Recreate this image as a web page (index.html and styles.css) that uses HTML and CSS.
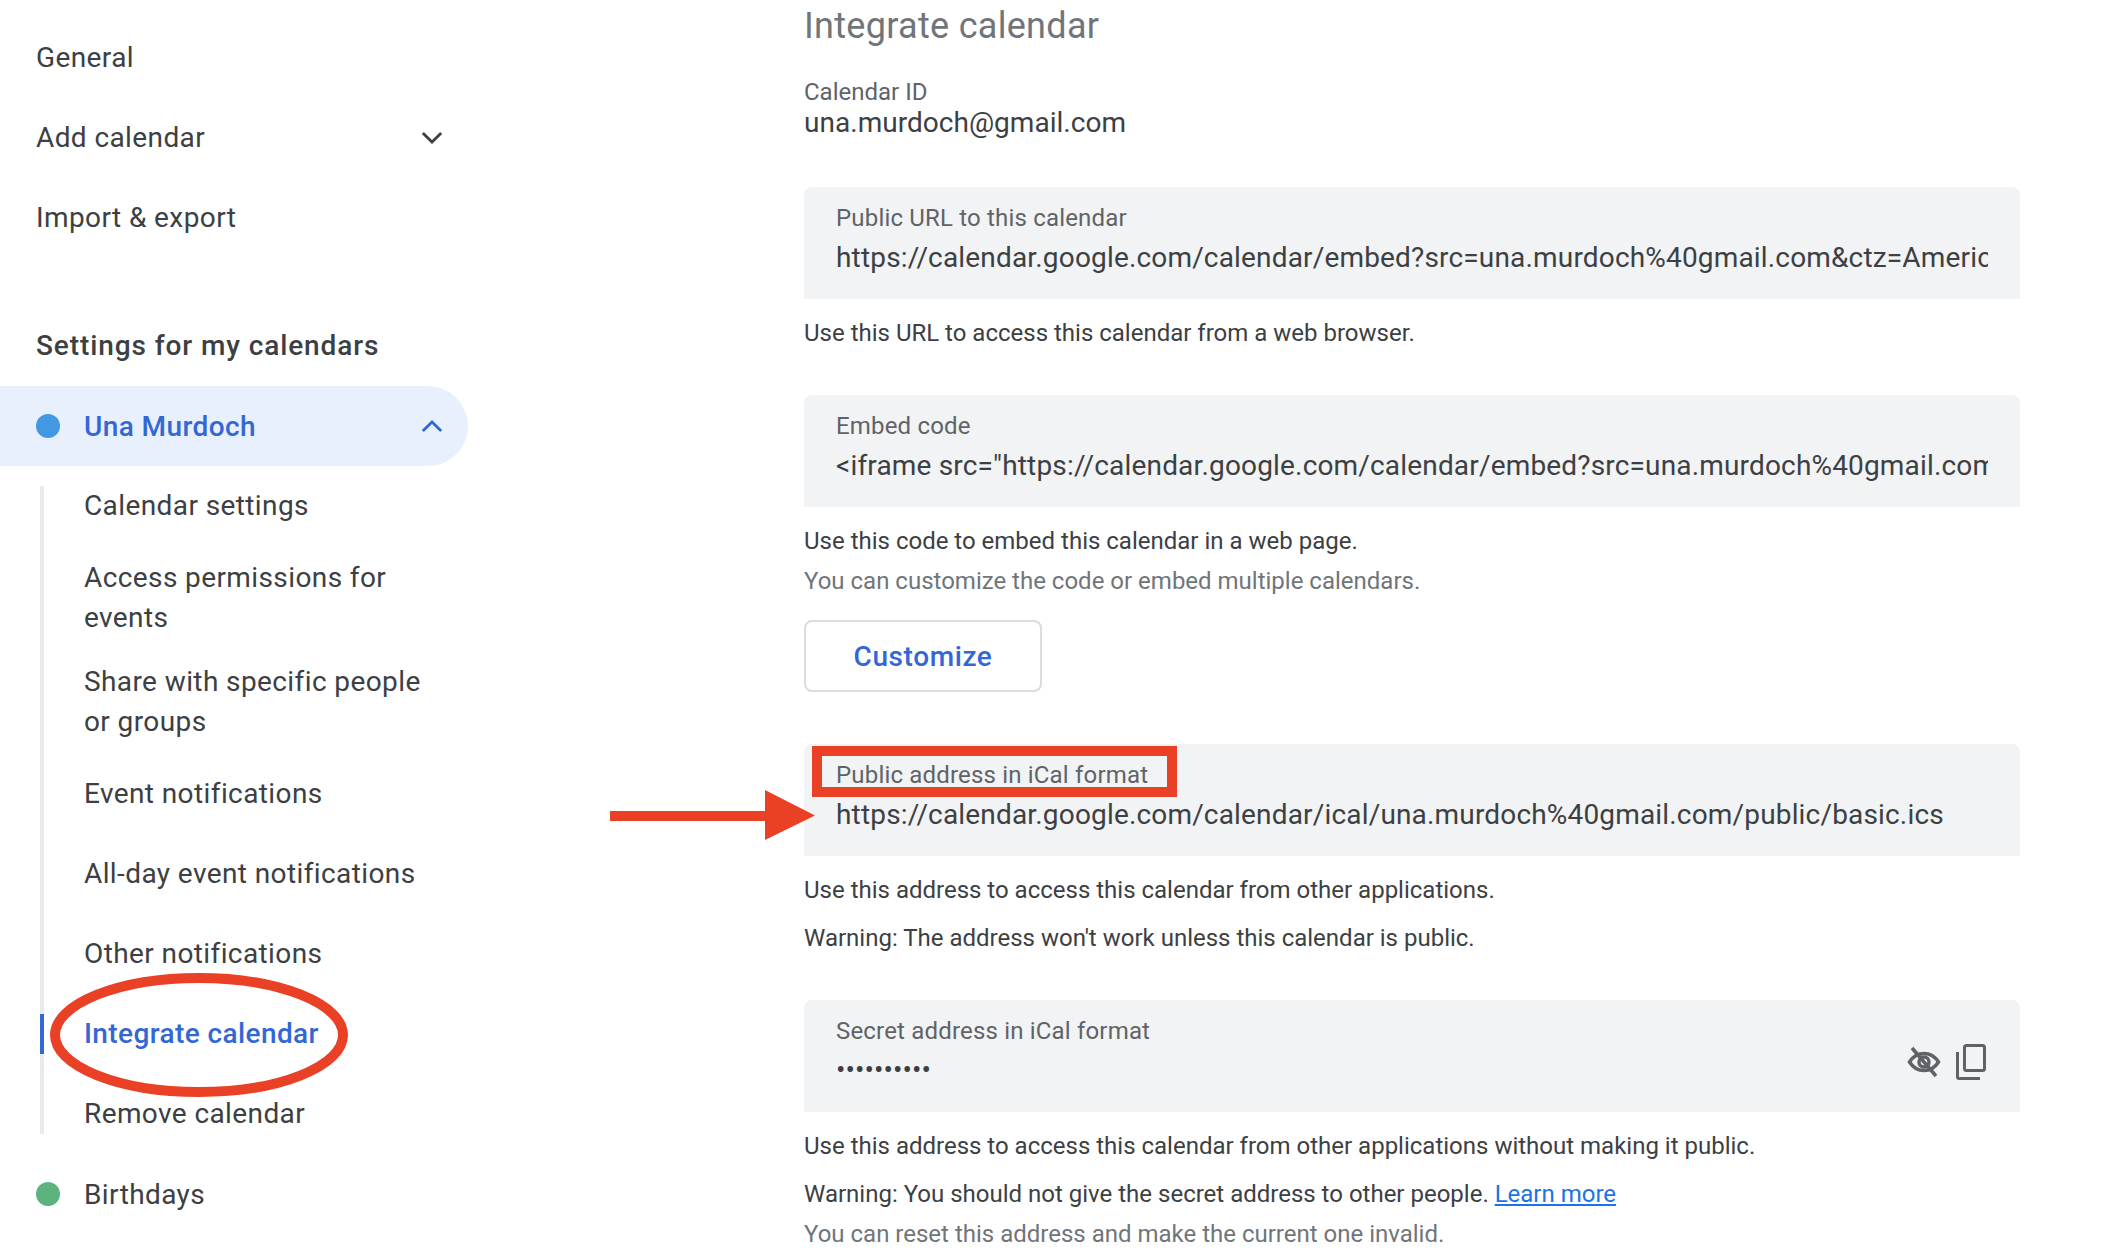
FILE: index.html
```html
<!DOCTYPE html>
<html lang="en">
<head>
<meta charset="utf-8">
<title>Integrate calendar</title>
<link rel="stylesheet" href="styles.css">
</head>
<body>
<div class="page">
  <nav class="sidebar">
    <a class="nav-row">General</a>
    <a class="nav-row nav-split">Add calendar
      <svg class="chev" viewBox="0 0 24 14"><path d="M2 2l10 10L22 2"/></svg>
    </a>
    <a class="nav-row">Import &amp; export</a>
    <h2 class="nav-heading">Settings for my calendars</h2>
    <a class="nav-row cal-row cal-active"><span class="dot dot-blue"></span><span class="cal-name">Una Murdoch</span>
      <svg class="chev chev-up" viewBox="0 0 24 14"><path d="M2 12L12 2l10 10"/></svg>
    </a>
    <ul class="sub-list">
      <li class="sub-item">Calendar settings</li>
      <li class="sub-item sub-wrap">Access permissions for events</li>
      <li class="sub-item sub-wrap">Share with specific people or groups</li>
      <li class="sub-item">Event notifications</li>
      <li class="sub-item">All-day event notifications</li>
      <li class="sub-item">Other notifications</li>
      <li class="sub-item sub-active">Integrate calendar</li>
      <li class="sub-item">Remove calendar</li>
    </ul>
    <a class="nav-row cal-row"><span class="dot dot-green"></span><span class="cal-name">Birthdays</span></a>
  </nav>

  <main class="content">
    <h1 class="title">Integrate calendar</h1>
    <div class="id-label">Calendar ID</div>
    <div class="id-value">una.murdoch@gmail.com</div>

    <section class="field field-first">
      <div class="field-label">Public URL to this calendar</div>
      <div class="field-value">https://calendar.google.com/calendar/embed?src=una.murdoch%40gmail.com&amp;ctz=America%2FNew_York</div>
    </section>
    <p class="note note-a">Use this URL to access this calendar from a web browser.</p>

    <section class="field field-embed">
      <div class="field-label">Embed code</div>
      <div class="field-value">&lt;iframe src="https://calendar.google.com/calendar/embed?src=una.murdoch%40gmail.com&amp;ctz=America%2FNew_York"</div>
    </section>
    <p class="note note-a">Use this code to embed this calendar in a web page.</p>
    <p class="note note-muted">You can customize the code or embed multiple calendars.</p>
    <button class="btn">Customize</button>

    <section class="field field-ical">
      <div class="field-label">Public address in iCal format</div>
      <div class="field-value">https://calendar.google.com/calendar/ical/una.murdoch%40gmail.com/public/basic.ics</div>
    </section>
    <p class="note note-a">Use this address to access this calendar from other applications.</p>
    <p class="note note-b">Warning: The address won't work unless this calendar is public.</p>

    <section class="field field-secret">
      <div class="field-label">Secret address in iCal format</div>
      <div class="field-value field-dots">••••••••••</div>
      <div class="field-icons">
        <svg class="icon-eye" viewBox="0 0 34 32"><path d="M2.500 16C6 10.500 11 7.500 17 7.500S28 10.500 31.500 16C28 21.500 23 24.500 17 24.500S6 21.500 2.500 16z"/><circle cx="17" cy="16" r="5"/><path d="M5 2l24 28"/></svg>
        <svg class="icon-copy" viewBox="0 0 30 36"><rect x="8.500" y="1.500" width="20" height="25" rx="2"/><path d="M1.500 8v25c0 1 .5 1.500 1.500 1.500h21"/></svg>
      </div>
    </section>
    <p class="note note-a">Use this address to access this calendar from other applications without making it public.</p>
    <p class="note note-b">Warning: You should not give the secret address to other people. <a class="link">Learn more</a></p>
    <p class="note note-muted">You can reset this address and make the current one invalid.</p>
  </main>

  <svg class="marks" viewBox="0 0 2118 1260">
    <ellipse class="mark-line" cx="199" cy="1035" rx="144" ry="57"/>
    <rect class="mark-line" x="817" y="751" width="355" height="41"/>
    <path class="mark-fill" d="M610 811H765V790L815 815.500 765 840V821H610z"/>
  </svg>
</div>
</body>
</html>
```
FILE: styles.css
```css
* { box-sizing: border-box; }
html, body { margin: 0; padding: 0; background: #fff; }
body { font-family: Roboto, "Liberation Sans", sans-serif; color: #3c4043; }
.page { position: relative; width: 2118px; height: 1260px; overflow: hidden; display: flex; }

.sidebar { width: 468px; padding-top: 17px; flex: none; }
.nav-row { display: flex; align-items: center; height: 80px; padding-left: 36px; font-size: 28px; letter-spacing: .4px; color: #3c4043; }
.nav-split { justify-content: space-between; padding-right: 25px; }
.nav-heading { margin: 49px 0 0; height: 80px; padding-left: 36px; font: 500 28px/80px Roboto, sans-serif; letter-spacing: .9px; color: #3c4043; }
.chev { width: 22px; height: 13px; fill: none; stroke: #3c4043; stroke-width: 3; }
.chev-up { stroke: #3367d6; margin-left: auto; margin-right: 25px; }
.cal-row { padding-left: 36px; }
.dot { width: 24px; height: 24px; border-radius: 50%; flex: none; margin-right: 24px; }
.dot-blue { background: #4299e1; }
.dot-green { background: #5cb37f; }
.cal-active { background: #e8f0fe; border-radius: 0 40px 40px 0; color: #3367d6; font-weight: 500; }

.sub-list { list-style: none; margin: 0; padding: 0; position: relative; }
.sub-list::before { content: ""; position: absolute; left: 40px; top: 20px; bottom: 20px; width: 4px; background: #e8eaed; }
.sub-item { position: relative; display: flex; align-items: center; min-height: 80px; padding: 0 30px 0 84px; font-size: 28px; line-height: 40px; letter-spacing: .4px; color: #3c4043; }
.sub-wrap { padding-top: 12px; padding-bottom: 12px; }
.sub-active { color: #3367d6; font-weight: 500; }
.sub-active::before { content: ""; position: absolute; left: 40px; top: 20px; bottom: 20px; width: 4px; background: #3367d6; }

.content { margin-left: 336px; width: 1216px; flex: none; }
.title { margin: 0; padding-top: 3px; height: 50px; font-size: 36px; line-height: 46px; font-weight: 400; letter-spacing: .3px; color: #70757a; }
.id-label { margin-top: 26px; font-size: 24px; line-height: 32px; color: #5f6368; }
.id-value { font-size: 28px; line-height: 30px; letter-spacing: .03px; color: #3c4043; }

.field { position: relative; height: 112px; padding: 15px 32px 0; background: #f1f3f4; border-radius: 8px 8px 0 0; }
.field-first { margin-top: 49px; }
.field-embed { margin-top: 46px; }
.field-ical { margin-top: 52px; }
.field-secret { margin-top: 46px; }
.field-label { font-size: 24px; line-height: 32px; letter-spacing: .18px; color: #5f6368; }
.field-value { margin-top: 4px; font-size: 28px; line-height: 40px; letter-spacing: .17px; color: #3c4043; white-space: nowrap; overflow: hidden; }
.field-dots { margin-top: 3px; letter-spacing: .05px; }
.field-icons { position: absolute; right: 34px; top: 44px; display: flex; align-items: center; gap: 15px; }
.icon-eye { width: 34px; height: 32px; fill: none; stroke: #5f6368; stroke-width: 3.500; }
.icon-copy { width: 30px; height: 36px; fill: none; stroke: #5f6368; stroke-width: 3; }

.note { margin: 0; font-size: 24px; line-height: 32px; color: #3c4043; }
.note-a { margin-top: 18px; }
.note-b { margin-top: 16px; }
.note-muted { margin-top: 8px; color: #70757a; }
.link { color: #1a73e8; text-decoration: underline; }

.btn { display: block; margin-top: 23px; width: 238px; height: 72px; padding: 0; background: #fff; border: 2px solid #dadce0; border-radius: 8px; font: 500 28px Roboto, sans-serif; letter-spacing: .6px; color: #3367d6; }

.marks { position: absolute; left: 0; top: 0; width: 2118px; height: 1260px; pointer-events: none; }
.mark-line { fill: none; stroke: #ea4025; stroke-width: 10; }
.mark-fill { fill: #ea4025; }
```
